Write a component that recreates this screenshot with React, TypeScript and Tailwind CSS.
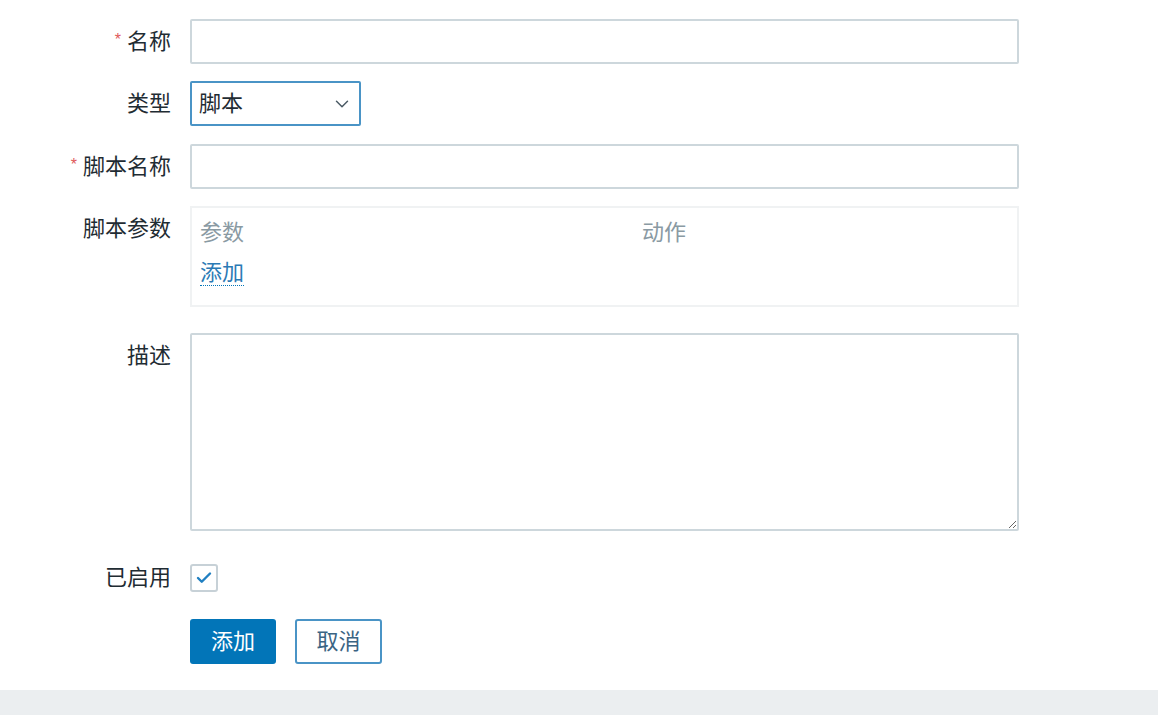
import { Check, ChevronDown } from "lucide-react";

const FONT = "font-['Liberation_Sans','Noto_Sans_CJK_SC',sans-serif]";

function Label({ text, required }: { text: string; required?: boolean }) {
  return (
    <div className="h-[45px] w-[171px] shrink-0 text-right text-[22px] leading-[45px] text-[#1f2c33]">
      {required && <span className="relative -top-[4px] mr-[6px] text-[16px] leading-none text-[#e05a5a]">*</span>}
      {text}
    </div>
  );
}

export default function App() {
  return (
    <div className={`${FONT} flex h-[715px] w-[1158px] flex-col bg-white`}>
      <div className="flex flex-1 flex-col pt-[19px]">
        {/* 名称 */}
        <div className="flex gap-[19px]">
          <Label text="名称" required />
          <input className="h-[45px] w-[829px] rounded-[2px] border-2 border-[#cdd7dc] bg-white outline-none" />
        </div>

        {/* 类型 */}
        <div className="mt-[17px] flex gap-[19px]">
          <Label text="类型" />
          <div className="flex h-[45px] w-[171px] items-center justify-between rounded-[2px] border-2 border-[#4a94c6] pl-[7px] pr-[6px] text-[22px] text-[#1f2c33]">
            <span>脚本</span>
            <ChevronDown className="h-[22px] w-[22px] text-[#4a5a64]" strokeWidth={1.6} />
          </div>
        </div>

        {/* 脚本名称 */}
        <div className="mt-[18px] flex gap-[19px]">
          <Label text="脚本名称" required />
          <input className="h-[45px] w-[829px] rounded-[2px] border-2 border-[#cdd7dc] bg-white outline-none" />
        </div>

        {/* 脚本参数 */}
        <div className="mt-[17px] flex gap-[19px]">
          <Label text="脚本参数" />
          <div className="h-[101px] w-[829px] border-2 border-[#f0f2f3] px-[8px] pt-[9px]">
            <div className="flex text-[22px] leading-[32px] text-[#8a9aa3]">
              <span className="w-[442px]">参数</span>
              <span>动作</span>
            </div>
            <div className="mt-[9px] text-[22px] leading-[30px]">
              <span className="border-b border-dotted border-[#0275b8] text-[#2b7ab5]">添加</span>
            </div>
          </div>
        </div>

        {/* 描述 */}
        <div className="mt-[26px] flex gap-[19px]">
          <Label text="描述" />
          <textarea className="h-[198px] w-[829px] rounded-[2px] border-2 border-[#cdd7dc] bg-white outline-none" />
        </div>

        {/* 已启用 */}
        <div className="mt-[33px] flex items-center gap-[19px]">
          <div className="h-[28px] w-[171px] shrink-0 text-right text-[22px] leading-[28px] text-[#1f2c33]">已启用</div>
          <div className="flex h-[28px] w-[28px] items-center justify-center rounded-[3px] border-2 border-[#c7d1d7] bg-white">
            <Check className="h-[18px] w-[18px] text-[#1f7fc1]" strokeWidth={3.2} />
          </div>
        </div>

        {/* buttons */}
        <div className="mt-[27px] flex gap-[19px] pl-[190px]">
          <button className="h-[45px] w-[86px] rounded-[3px] bg-[#0275b8] text-[22px] text-white">添加</button>
          <button className="h-[45px] w-[87px] rounded-[3px] border-2 border-[#4a94c6] bg-white text-[22px] text-[#3a6483]">取消</button>
        </div>
      </div>
      <div className="h-[25px] bg-[#ebeef0]" />
    </div>
  );
}
